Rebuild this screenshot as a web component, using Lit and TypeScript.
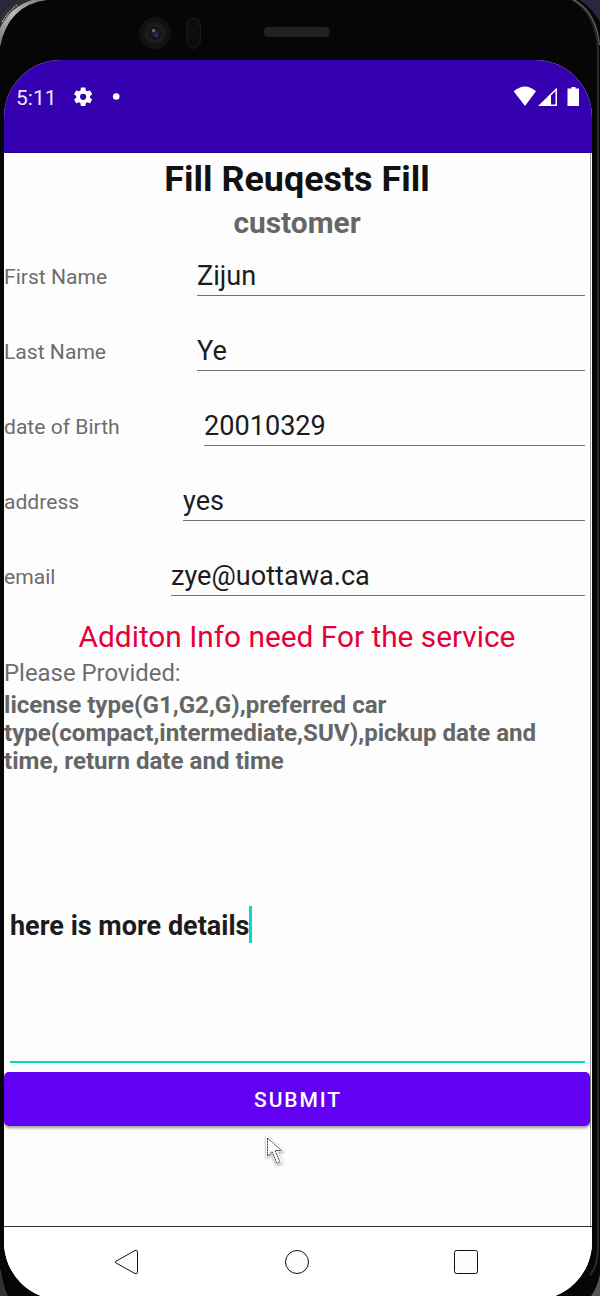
import { LitElement, html, css } from "lit";
import { customElement, property } from "lit/decorators.js";

@customElement("form-row")
class FormRow extends LitElement {
  @property() label = "";
  @property() value = "";
  @property() kind = "";
  static styles = css`
    :host { display: flex; height: 75px; align-items: flex-start; box-sizing: border-box; padding-right: 5px; }
    .label { width: 193px; flex: none; padding-top: 20px; line-height: 30px; font-size: 21.1px; color: #6d6d6d; white-space: nowrap; }
    .field { flex: 1; height: 54px; box-sizing: border-box; padding-top: 17px; line-height: 34px; font-size: 27.1px; color: #1c1c1c; border-bottom: 1.5px solid #717171; white-space: nowrap; }
    .label.birth { width: 200px; }
    .label.address { width: 179px; }
    .label.email { width: 167px; }
  `;
  render() {
    return html`<div class="label ${this.kind}">${this.label}</div><div class="field">${this.value}</div>`;
  }
}

@customElement("app-root")
class AppRoot extends LitElement {
  static styles = css`
    :host { display: block; width: 600px; height: 1296px; overflow: hidden; font-family: Roboto, "Liberation Sans", sans-serif; }
    .device { position: relative; display: flex; flex-direction: column; width: 600px; height: 1296px; overflow: hidden; background: #060607; }
    .shell { position: absolute; left: 0; top: 0; }
    .bezel { height: 60px; flex: none; }
    .screen { position: relative; margin-left: 4px; width: 588px; height: 1240px; flex: none; border-radius: 57px 57px 58px 58px; background: #fdfdfd; overflow: hidden; display: flex; flex-direction: column; }
    .status { height: 93px; flex: none; background: #3400b0; box-sizing: border-box; border-bottom: 1px solid #2b0091; padding: 22px 12px 0 12px; display: flex; color: #fff; }
    .time { font-size: 21px; line-height: 32px; width: 56px; color: #ece6f7; }
    .grow { flex: 1; }
    .body { height: 1073px; flex: none; box-sizing: border-box; margin-right: 1px; border-right: 1px solid #999; display: flex; flex-direction: column; }
    h1 { margin: 0; font-size: 35.9px; line-height: 51px; height: 51px; padding-top: 1px; box-sizing: border-box; text-align: center; color: #111; font-weight: 700; }
    h2 { margin: 0; font-size: 29.9px; line-height: 38px; height: 38px; text-align: center; color: #666; font-weight: 700; }
    .info { height: 40px; line-height: 40px; font-size: 29.8px; text-align: center; color: #e5003c; white-space: nowrap; }
    .provided { height: 32px; line-height: 32px; font-size: 23.9px; color: #6d6d6d; }
    .need { padding-top: 1.5px; height: 86.5px; box-sizing: border-box; font-size: 24.1px; line-height: 28.2px; font-weight: 700; color: #666; white-space: nowrap; }
    .details { margin: 130px 5px 0 6px; height: 157px; box-sizing: border-box; border-bottom: 2px solid #05d6c5; display: flex; align-items: flex-start; font-size: 27px; line-height: 41px; font-weight: 700; color: #1c1c1c; white-space: nowrap; }
    .caret { width: 3px; height: 37px; background: #08d8c2; }
    button { margin: 9px 0 0; padding: 1px 0 0; border: 0; height: 54px; border-radius: 5px; background: #6200f4; color: #fff; font: 500 21px/54px Roboto, sans-serif; letter-spacing: 1.9px; text-indent: 2px; box-shadow: 0 2px 3px #0006; }
    .nav { height: 73px; flex: none; border-top: 1px solid #333; background: #fff; }
    .cursor { position: absolute; left: 262px; top: 1132px; filter: drop-shadow(0 1.5px 1.5px #0006); }
    svg { display: block; }
  `;

  shell() {
    return html`<svg class="shell" width="600" height="1296" viewBox="0 0 600 1296">
      <defs>
        <linearGradient id="edge" x1="0" y1="1" x2="1" y2="0"><stop offset="0" stop-color="#777"/><stop offset=".5" stop-color="#bbb"/><stop offset="1" stop-color="#777"/></linearGradient>
        <pattern id="mesh" width="2" height="2" patternUnits="userSpaceOnUse"><rect width="2" height="2" fill="#252525"/><rect width="1" height="1" fill="#181818"/></pattern>
        <radialGradient id="lens"><stop offset="0" stop-color="#29293a"/><stop offset=".5" stop-color="#11111b"/><stop offset=".65" stop-color="#1f1f20"/><stop offset="1" stop-color="#151515"/></radialGradient>
      </defs>
      <path d="M0 0H17Q6 6 0 16Z" fill="#29263f"/>
      <path d="M580 0H600V22Q592 8 580 0Z" fill="#29263f"/>
      <path d="M0 16Q6 6 17 0H32Q10 8 0 28Z" fill="#303030"/>
      <path d="M2 22Q8 12 17 5" fill="none" stroke="#eee" stroke-width="1" stroke-dasharray="2 1"/>
      <path d="M0 28Q10 7 32 0H47Q8 5 0 47Z" fill="url(#edge)"/>
      <path d="M569 -2Q597 12 598 50V1245Q598 1266 590 1275" fill="none" stroke="#2a2a2a" stroke-width="2"/>
      <path d="M570 -2Q596 9 599.500 45" fill="none" stroke="#666" stroke-width="1.2"/>
      <path d="M1 1270Q3 1286 8 1296H0V1270Z" fill="#333"/>
      <path d="M600 1274Q597 1288 591 1296H600Z" fill="#555"/>
      <circle cx="155" cy="33" r="16" fill="#121212"/>
      <circle cx="155" cy="33" r="11.500" fill="url(#lens)"/>
      <circle cx="153.500" cy="30.500" r="1.500" fill="#77777f"/>
      <circle cx="156.500" cy="35.500" r="2" fill="#303060"/>
      <rect x="186.500" y="17.500" width="14" height="31" rx="7" fill="#0d0d0d" stroke="#161616"/>
      <circle cx="193.500" cy="24" r="5.500" fill="#0b0b0b" stroke="#161616"/>
      <circle cx="193.500" cy="41" r="5.500" fill="#0b0b0b" stroke="#161616"/>
      <rect x="264" y="27" width="65.500" height="10" rx="4" fill="url(#mesh)"/>
    </svg>`;
  }

  render() {
    return html`<div class="device">
      ${this.shell()}
      <div class="bezel"></div>
      <div class="screen">
        <div class="status">
          <div class="time">5:11</div>
          <svg width="50" height="30" viewBox="0 0 50 30" fill="#fff">
            <g transform="translate(-.4 3.300) scale(.96)"><path d="M19.140 12.940c.04-.3.060-.61.060-.94 0-.32-.02-.64-.07-.94l2.030-1.580c.18-.14.230-.41.120-.61l-1.920-3.320c-.12-.22-.37-.29-.59-.22l-2.390.96c-.5-.38-1.030-.7-1.620-.94l-.36-2.540c-.04-.24-.24-.41-.48-.41h-3.840c-.24 0-.43.17-.47.410l-.36 2.540c-.59.240-1.130.570-1.620.940l-2.390-.96c-.22-.08-.47 0-.59.220L2.740 8.870c-.12.210-.08.470.120.610l2.030 1.580c-.05.300-.09.630-.09.940s.02.640.070.940l-2.030 1.580c-.18.140-.23.410-.12.610l1.920 3.320c.120.220.370.290.590.220l2.390-.96c.5.380 1.030.7 1.620.94l.36 2.540c.05.240.24.410.48.410h3.840c.24 0 .44-.17.470-.41l.36-2.540c.59-.24 1.130-.56 1.620-.94l2.390.96c.22.080.470 0 .59-.22l1.920-3.320c.12-.22.070-.47-.12-.61l-2.010-1.580zM12 15.200a3.200 3.200 0 1 1 0-6.400 3.200 3.200 0 0 1 0 6.400z"/></g>
            <circle cx="44.200" cy="14.500" r="3.300"/>
          </svg>
          <div class="grow"></div>
          <svg width="66" height="26" viewBox="0 0 66 26" fill="#fff">
            <path d="M-.3 9.300Q11-.3 22 9.300L11 24Z"/>
            <path fill-rule="evenodd" d="M24 24L43 5.500V24ZM37 13.500V22.500H41.500V9Z"/>
            <path d="M57.500 5H61.500V6.500H65V24H53.500V6.500H57.500Z"/>
          </svg>
        </div>
        <div class="body">
          <h1>Fill Reuqests Fill</h1>
          <h2>customer</h2>
          <form-row label="First Name" value="Zijun"></form-row>
          <form-row label="Last Name" value="Ye"></form-row>
          <form-row label="date of Birth" value="20010329" kind="birth"></form-row>
          <form-row label="address" value="yes" kind="address"></form-row>
          <form-row label="email" value="zye@uottawa.ca" kind="email"></form-row>
          <div class="info">Additon Info need For the service</div>
          <div class="provided">Please Provided:</div>
          <div class="need">license type(G1,G2,G),preferred car<br>type(compact,intermediate,SUV),pickup date and<br>time, return date and time</div>
          <div class="details">here is more details<div class="caret"></div></div>
          <button>SUBMIT</button>
        </div>
        <div class="nav">
          <svg width="588" height="70" viewBox="0 0 588 70" fill="#fdfdfd" stroke="#111" stroke-width="1">
            <path d="M111.500 34.500L131 23.500Q133.500 22.500 133.500 25V45Q133.500 47.500 131 46.500L112 36Q110.500 35.200 111.500 34.500Z"/>
            <circle cx="293" cy="35" r="11.500"/>
            <rect x="450.500" y="23.500" width="23" height="23" rx="2"/>
          </svg>
        </div>
      </div>
      <svg class="cursor" width="26" height="38" viewBox="0 0 26 38">
        <path d="M4 2.500L4 26L9.500 21L14.500 33L20.500 30L15.500 19.500H23Z" fill="#fff"/>
        <path d="M5.500 6V24L10 19.500L15 31.500L18 30L13 18.500H19.500Z" fill="#fff" stroke="#222" stroke-width=".9" stroke-dasharray="2 .7"/>
      </svg>
    </div>`;
  }
}
